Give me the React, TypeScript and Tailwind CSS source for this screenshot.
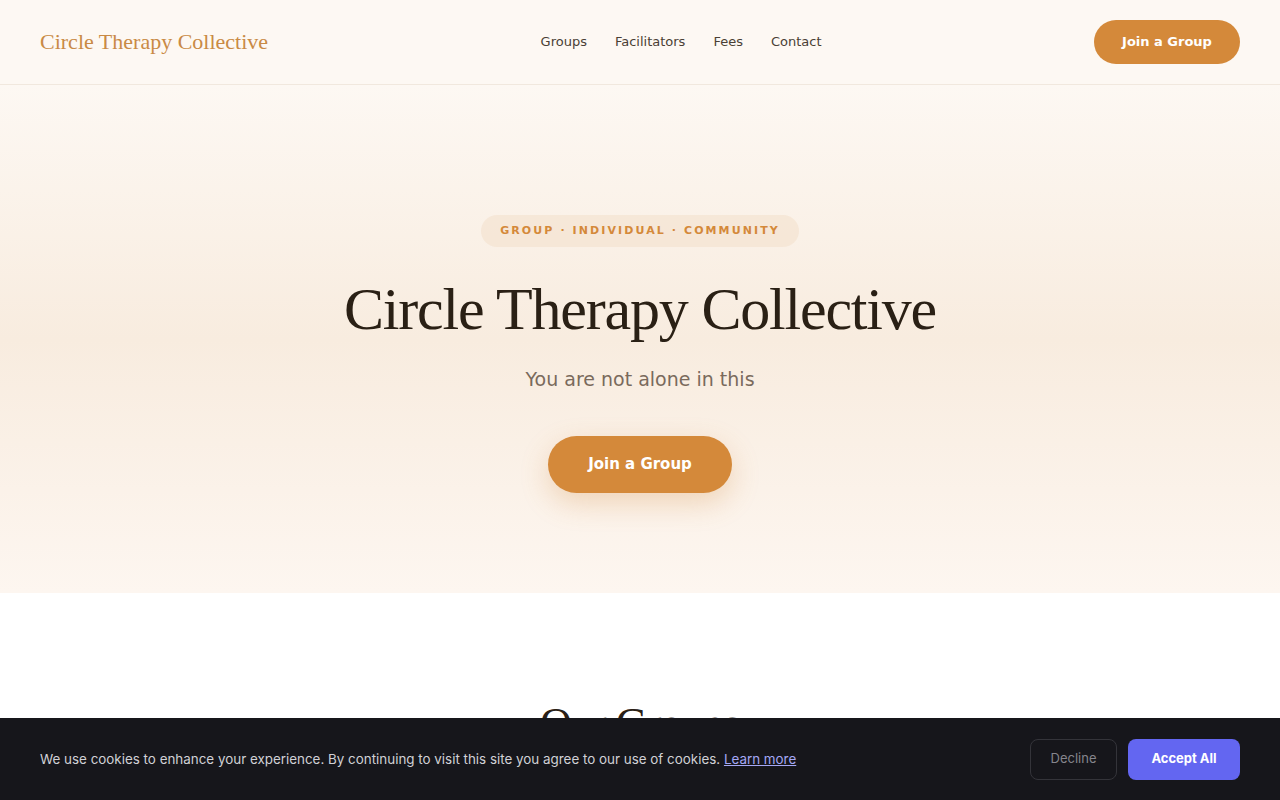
import React from "react";

export default function App() {
  return (
    <div className="min-h-screen bg-white">
      <header className="h-[85px] border-b border-[#f1e8de] bg-[#fdf8f3] px-10 flex items-center justify-between">
        <div className="text-[22px] leading-[28px] text-[#c98a45] font-['Liberation_Serif',serif]">Circle Therapy Collective</div>
        <nav className="flex items-center gap-7 text-[13px] text-[#4a3f35] font-['DejaVu_Sans',sans-serif]">
          <a>Groups</a>
          <a>Facilitators</a>
          <a>Fees</a>
          <a>Contact</a>
        </nav>
        <button className="h-[44px] w-[146px] rounded-full bg-[#d4893a] text-white text-[13px] font-bold font-['DejaVu_Sans',sans-serif]">Join a Group</button>
      </header>
      <section className="h-[508px] bg-[linear-gradient(180deg,#fdf8f3_0%,#f8ecdf_50%,#fdf6f0_100%)] flex flex-col items-center pt-[130px]">
        <div className="h-[32px] px-[19px] rounded-full bg-[#f5e5d3]/80 flex items-center text-[11px] font-bold tracking-[0.19em] text-[#d4893a] font-['DejaVu_Sans',sans-serif]">
          GROUP · INDIVIDUAL · COMMUNITY
        </div>
        <h1 className="mt-[26px] text-[60px] leading-[72px] tracking-[-0.02em] text-[#2a2015] font-['Liberation_Serif',serif]">Circle Therapy Collective</h1>
        <p className="mt-[20px] text-[19px] text-[#7a6a5c] font-['DejaVu_Sans',sans-serif]">You are not alone in this</p>
        <button className="mt-[42px] h-[57px] w-[184px] rounded-full bg-[#d4893a] text-white text-[15px] font-bold font-['DejaVu_Sans',sans-serif] shadow-[0_10px_28px_rgba(212,137,58,0.28)]">Join a Group</button>
      </section>
      <section className="bg-white pt-[105px] flex flex-col items-center h-[400px]">
        <h2 className="text-[44px] leading-[52px] tracking-[-0.02em] text-[#2a2015] font-['Liberation_Serif',serif]">Our Groups</h2>
      </section>
      <div className="fixed bottom-0 left-0 right-0 h-[82px] bg-[#16161b] px-10 flex items-center justify-between font-['Inter',sans-serif]">
        <p className="text-[13.4px] text-[#d1d1d6]">
          We use cookies to enhance your experience. By continuing to visit this site you agree to our use of cookies.{" "}
          <a className="text-[#a5a8f5] underline">Learn more</a>
        </p>
        <div className="flex gap-[11px]">
          <button className="h-[41px] w-[87px] rounded-lg border border-[#34343a] text-[13px] text-[#85858c]">Decline</button>
          <button className="h-[41px] w-[112px] rounded-lg bg-[#6366f1] text-[13px] font-bold text-white">Accept All</button>
        </div>
      </div>
    </div>
  );
}
